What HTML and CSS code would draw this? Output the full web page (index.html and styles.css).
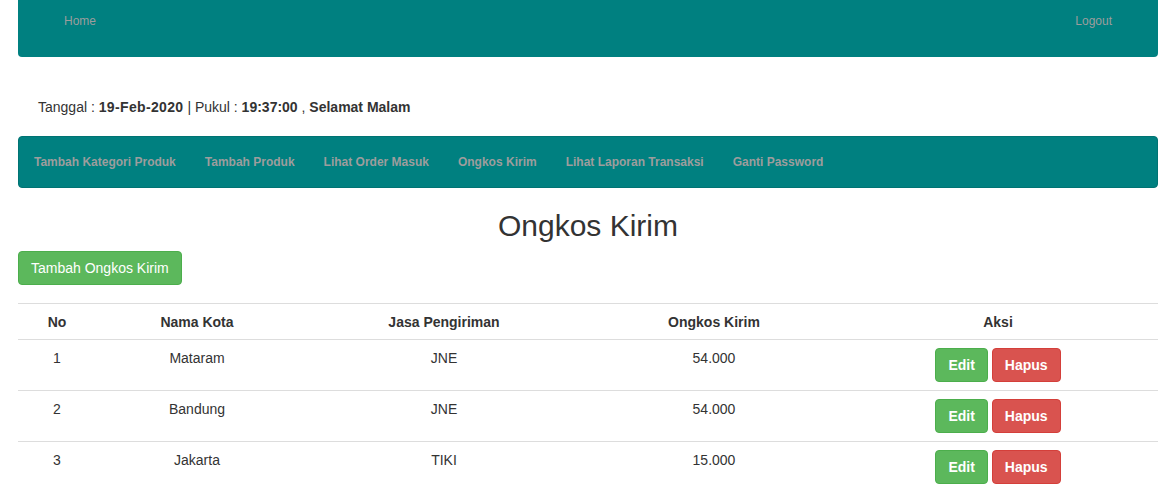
FILE: index.html
```html
<!DOCTYPE html>
<html lang="id">
<head>
<meta charset="utf-8">
<title>Ongkos Kirim</title>
<link rel="stylesheet" href="styles.css">
</head>
<body>
<div class="container">
  <nav class="topbar">
    <a class="top-link" href="#">Home</a>
    <a class="top-link" href="#">Logout</a>
  </nav>
  <p class="dateline">Tanggal : <b class="date">19-Feb-2020</b> | Pukul : <b>19:37:00</b> , <b>Selamat Malam</b></p>
  <nav class="menubar">
    <a class="menu-link" href="#">Tambah Kategori Produk</a>
    <a class="menu-link" href="#">Tambah Produk</a>
    <a class="menu-link" href="#">Lihat Order Masuk</a>
    <a class="menu-link" href="#">Ongkos Kirim</a>
    <a class="menu-link" href="#">Lihat Laporan Transaksi</a>
    <a class="menu-link" href="#">Ganti Password</a>
  </nav>
  <h2 class="title">Ongkos Kirim</h2>
  <a class="btn btn-success" href="#">Tambah Ongkos Kirim</a>
  <table class="table">
    <colgroup>
      <col class="c1"><col class="c2"><col class="c3"><col class="c4"><col class="c5">
    </colgroup>
    <thead>
      <tr><th>No</th><th>Nama Kota</th><th>Jasa Pengiriman</th><th>Ongkos Kirim</th><th>Aksi</th></tr>
    </thead>
    <tbody>
      <tr><td>1</td><td>Mataram</td><td>JNE</td><td>54.000</td><td><span class="actions"><a class="btn btn-success bold" href="#">Edit</a><a class="btn btn-danger bold" href="#">Hapus</a></span></td></tr>
      <tr><td>2</td><td>Bandung</td><td>JNE</td><td>54.000</td><td><span class="actions"><a class="btn btn-success bold" href="#">Edit</a><a class="btn btn-danger bold" href="#">Hapus</a></span></td></tr>
      <tr><td>3</td><td>Jakarta</td><td>TIKI</td><td>15.000</td><td><span class="actions"><a class="btn btn-success bold" href="#">Edit</a><a class="btn btn-danger bold" href="#">Hapus</a></span></td></tr>
    </tbody>
  </table>
</div>
</body>
</html>
```

FILE: styles.css
```css
* { box-sizing: border-box; }
html, body { margin: 0; padding: 0; background: #fff; }
body {
  font-family: "Liberation Sans", Arial, Helvetica, sans-serif;
  font-size: 14px;
  line-height: 20px;
  color: #333;
}
a { text-decoration: none; }
.container {
  width: 1140px;
  margin: 0 auto;
}
.topbar {
  height: 57px;
  background: #008080;
  border-radius: 0 0 4px 4px;
  display: flex;
  justify-content: space-between;
  align-items: flex-start;
  padding: 11px 46px 0 46px;
}
.top-link {
  color: #9d9d9d;
  font-size: 12px;
  line-height: 20px;
}
.dateline {
  margin: 0;
  padding: 40px 20px 19px 20px;
  line-height: 20px;
}
.date { letter-spacing: 0.35px; }
.menubar {
  height: 52px;
  background: #008080;
  border: 1px solid #007373;
  border-radius: 4px;
  display: flex;
  align-items: flex-start;
  padding: 15px 0 0 15px;
  gap: 29px;
}
.menu-link {
  color: #9d9d9d;
  font-size: 12px;
  font-weight: bold;
  line-height: 20px;
}
.title {
  margin: 21px 0 9px 0;
  font-size: 30px;
  line-height: 33px;
  font-weight: 500;
  text-align: center;
}
.btn {
  display: inline-block;
  padding: 6px 12px;
  font-size: 14px;
  line-height: 20px;
  border: 1px solid transparent;
  border-radius: 4px;
  color: #fff;
  vertical-align: top;
}
.btn-success { background: #5cb85c; border-color: #4cae4c; }
.btn-danger { background: #d9534f; border-color: #d43f3a; }
.bold { font-weight: bold; }
.table {
  margin-top: 18px;
  width: 100%;
  border-collapse: collapse;
  table-layout: fixed;
}
.c1 { width: 78px; }
.c2 { width: 202px; }
.c3 { width: 292px; }
.c4 { width: 248px; }
.c5 { width: 320px; }
.table th, .table td {
  padding: 8px;
  text-align: center;
  vertical-align: top;
  border-top: 1px solid #ddd;
  line-height: 20px;
}
.table th { font-weight: bold; padding-bottom: 7px; }
.actions {
  display: inline-flex;
  gap: 4px;
}
```
